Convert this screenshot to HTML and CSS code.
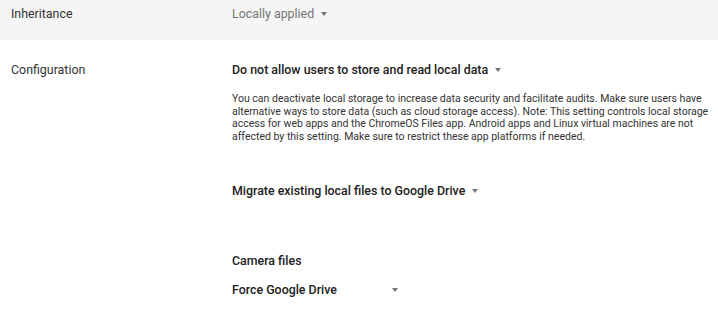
FILE: index.html
```html
<!DOCTYPE html>
<html lang="en">
<head>
    <meta charset="UTF-8">
    <title>Local storage settings</title>
    <link rel="stylesheet" href="styles.css">
</head>
<body>
    <div class="setting-row inherit-row">
        <div class="setting-label">Inheritance</div>
        <div class="setting-value">
            <span class="select muted">Locally applied <span class="caret"></span></span>
        </div>
    </div>

    <div class="setting-row config-row">
        <div class="setting-label">Configuration</div>
        <div class="setting-value">
            <span class="select strong">Do not allow users to store and read local data <span class="caret"></span></span>
            <p class="description">
                You can deactivate local storage to increase data security and facilitate audits. Make sure users have alternative ways to store data (such as cloud storage access). Note: This setting controls local storage access for web apps and the ChromeOS Files app. Android apps and Linux virtual machines are not affected by this setting. Make sure to restrict these app platforms if needed.
            </p>
            <span class="select strong migrate">Migrate existing local files to Google Drive <span class="caret"></span></span>

            <div class="sub-heading">Camera files</div>
            <span class="select strong fixed">Force Google Drive <span class="caret"></span></span>
        </div>
    </div>
</body>
</html>
```

FILE: styles.css
```css
body {
    margin: 0;
    font-family: Roboto, "Liberation Sans", sans-serif;
    font-size: 12.4px;
    color: #333;
    background-color: #fff;
}

.setting-row {
    display: flex;
    flex-direction: row;
}

.setting-label {
    width: 221px;
    padding-left: 11px;
    line-height: 18px;
    flex-shrink: 0;
}

.setting-value {
    display: flex;
    flex-direction: column;
    align-items: flex-start;
}

.inherit-row {
    background-color: #f5f5f5;
    height: 40px;
    padding-top: 5px;
    box-sizing: border-box;
}

.config-row {
    padding-top: 21px;
}

.select {
    display: inline-flex;
    align-items: center;
    line-height: 18px;
}

.muted {
    color: #757575;
}

.strong {
    font-weight: 500;
    color: #212121;
}

.caret {
    display: inline-block;
    width: 0;
    height: 0;
    margin-left: 7px;
    border-left: 3.5px solid transparent;
    border-right: 3.5px solid transparent;
    border-top: 4px solid #757575;
}

.description {
    margin: 14px 0 0;
    width: 482px;
    font-size: 10.5px;
    line-height: 12.5px;
    color: #333;
}

.migrate {
    margin-top: 39px;
}

.sub-heading {
    margin-top: 52px;
    font-weight: 500;
    color: #212121;
    line-height: 18px;
}

.fixed {
    margin-top: 11px;
    width: 166px;
    justify-content: space-between;
}
```
